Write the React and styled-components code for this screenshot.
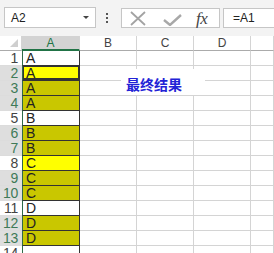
import React from 'react';
import styled, { createGlobalStyle } from 'styled-components';

const GlobalStyle = createGlobalStyle`
   html, body {
      margin: 0;
      padding: 0;
      background: #ffffff;
      overflow: hidden;
   }
   body {
      font-family: "Liberation Sans", Arial, sans-serif;
   }
`;

// row values, which rows are yellow, which are in the selection
const rows = [
   { v: 'A' },
   { v: 'A', fill: true, sel: true, active: true },
   { v: 'A', fill: true, sel: true },
   { v: 'A', fill: true, sel: true },
   { v: 'B' },
   { v: 'B', fill: true, sel: true },
   { v: 'B', fill: true, sel: true },
   { v: 'C', fill: true },
   { v: 'C', fill: true, sel: true },
   { v: 'C', fill: true, sel: true },
   { v: 'D' },
   { v: 'D', fill: true, sel: true },
   { v: 'D', fill: true, sel: true },
   { v: '' },
];

const App = () => {
   return (
      <>
         <GlobalStyle />
         <Sheet>
            <FormulaBar>
               <NameBox>
                  <span>A2</span>
                  <DropArrow />
               </NameBox>
               <Dots>
                  <i />
                  <i />
                  <i />
               </Dots>
               <FxButtons>
                  <svg width="16" height="15" viewBox="0 0 16 15">
                     <path d="M1 1 L15 14 M15 1 L1 14" stroke="#a3a3a3" strokeWidth="1.8" fill="none" />
                  </svg>
                  <svg width="19" height="12" viewBox="0 0 19 12">
                     <path d="M1 6 L7 11 L18 1" stroke="#a8a8a8" strokeWidth="2.4" fill="none" />
                  </svg>
                  <Fx>fx</Fx>
               </FxButtons>
               <FormulaInput>=A1</FormulaInput>
            </FormulaBar>

            <Grid>
               <Corner>
                  <svg width="8" height="8" viewBox="0 0 8 8">
                     <path d="M8 0 L8 8 L0 8 Z" fill="#cfcfcf" />
                  </svg>
               </Corner>
               <ColHead $active>A</ColHead>
               <ColHead>B</ColHead>
               <ColHead>C</ColHead>
               <ColHead>D</ColHead>
               <ColHead />

               {rows.map((row, index) => {
                  return (
                     <React.Fragment key={index}>
                        <RowHead $sel={row.sel}>{index + 1}</RowHead>
                        <ACell $fill={row.fill} $sel={row.sel} $active={row.active}>
                           {row.v}
                        </ACell>
                        <Cell />
                        <Cell />
                        <Cell />
                        <Cell />
                     </React.Fragment>
                  );
               })}
            </Grid>

            <TextBox>最终结果</TextBox>
         </Sheet>
      </>
   );
};

export default App;

const Sheet = styled.div`
   position: relative;
   width: 274px;
   height: 253px;
   overflow: hidden;
`;

const FormulaBar = styled.div`
   height: 36px;
   box-sizing: border-box;
   padding-top: 7px;
   background: #f3f3f3;
   display: flex;
   align-items: flex-start;
`;

const NameBox = styled.div`
   margin-left: 4px;
   width: 92px;
   height: 21px;
   box-sizing: border-box;
   border: 1px solid #c6c6c6;
   background: #ffffff;
   display: flex;
   align-items: center;
   justify-content: space-between;
   padding: 0 6px 0 6px;
   font-size: 12px;
   color: #222;
`;

const DropArrow = styled.span`
   width: 0;
   height: 0;
   border-left: 3px solid transparent;
   border-right: 3px solid transparent;
   border-top: 3px solid #444;
`;

const Dots = styled.div`
   width: 4px;
   margin: 6px 12px 0 9px;
   display: flex;
   flex-direction: column;
   align-items: center;
   gap: 2px;

   i {
      width: 2px;
      height: 2px;
      background: #555;
      display: block;
   }
`;

const FxButtons = styled.div`
   margin-top: 1px;
   width: 99px;
   height: 20px;
   box-sizing: border-box;
   border: 1px solid #c6c6c6;
   background: #ffffff;
   display: flex;
   align-items: center;
   padding-left: 8px;

   svg:first-child {
      margin-right: 17px;
   }
   svg:nth-child(2) {
      margin-top: 3px;
      margin-right: 14px;
   }
`;

const Fx = styled.span`
   font-family: "Liberation Serif", "Times New Roman", serif;
   font-style: italic;
   font-size: 17px;
   color: #444;
   letter-spacing: -0.5px;
   margin-top: 1px;
`;

const FormulaInput = styled.div`
   margin-top: 1px;
   margin-left: 3px;
   flex: 1;
   height: 20px;
   box-sizing: border-box;
   border: 1px solid #c6c6c6;
   border-right: none;
   background: #ffffff;
   font-size: 12px;
   color: #222;
   padding-left: 9px;
   line-height: 18px;
`;

const Grid = styled.div`
   display: grid;
   grid-template-columns: 22px 58px 57px 57px 57px 1fr;
   grid-auto-rows: 15px;
`;

const Corner = styled.div`
   box-sizing: border-box;
   border-right: 1px solid #d4d4d4;
   border-bottom: 1px solid #ababab;
   display: flex;
   align-items: flex-end;
   justify-content: flex-end;
   padding: 0 3px 3px 0;
   background: #ffffff;
`;

const ColHead = styled.div`
   box-sizing: border-box;
   border-right: 1px solid #d4d4d4;
   border-bottom: ${(p) => (p.$active ? '2px solid #217346' : '1px solid #ababab')};
   background: ${(p) => (p.$active ? '#d3d3d3' : '#ffffff')};
   color: ${(p) => (p.$active ? '#217346' : '#444')};
   font-size: 12px;
   text-align: center;
   line-height: 14px;
`;

const RowHead = styled.div`
   box-sizing: border-box;
   border-bottom: 1px solid #dcdcdc;
   background: ${(p) => (p.$sel ? '#dedede' : '#ffffff')};
   color: ${(p) => (p.$sel ? '#3f7a58' : '#444')};
   font-size: 14px;
   line-height: 15px;
   text-align: right;
   padding-right: 4px;
   letter-spacing: -0.3px;
`;

const ACell = styled.div`
   box-sizing: border-box;
   border-left: 1px solid #2f6a48;
   border-right: 1px solid #333;
   border-bottom: 1px solid #333;
   background: ${(p) =>
      p.$active ? '#ffff00' : p.$fill && p.$sel ? '#c9c700' : p.$fill ? '#ffff00' : '#ffffff'};
   box-shadow: ${(p) => (p.$active ? 'inset 0 0 0 1px #333, inset 0 -1px 0 1px #333' : 'none')};
   color: #222;
   font-size: 14px;
   line-height: 15px;
   padding-left: 3px;
`;

const Cell = styled.div`
   box-sizing: border-box;
   border-right: 1px solid #d4d4d4;
   border-bottom: 1px solid #d4d4d4;
   background: #ffffff;
`;

const TextBox = styled.div`
   position: absolute;
   left: 121px;
   top: 69px;
   width: 84px;
   height: 26px;
   box-sizing: border-box;
   padding: 8px 0 0 5px;
   background: #ffffff;
   font-family: "Noto Sans CJK SC", sans-serif;
   font-weight: 700;
   font-size: 14px;
   line-height: 15px;
   color: #2323d6;
`;
